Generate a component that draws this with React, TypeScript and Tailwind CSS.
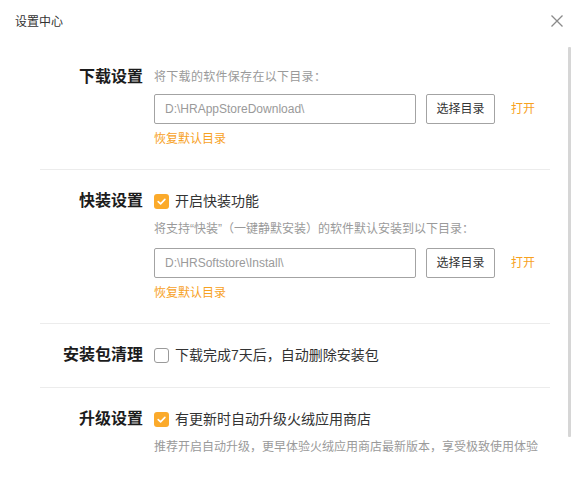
import React from "react";

const ORANGE = "text-[#f7a21f]";

function Check({ checked }: { checked: boolean }) {
  if (checked) {
    return (
      <span className="w-[15px] h-[15px] rounded-[3px] bg-[#fbaa2b] flex items-center justify-center shrink-0">
        <svg width="11" height="11" viewBox="0 0 11 11" fill="none">
          <path d="M2.2 5.6 L4.6 7.9 L8.9 3.4" stroke="#fff" strokeWidth="1.6" strokeLinecap="round" strokeLinejoin="round" />
        </svg>
      </span>
    );
  }
  return <span className="w-[15px] h-[15px] rounded-[3px] border border-[#9a9a9a] bg-white shrink-0" />;
}

function PathRow({ path }: { path: string }) {
  return (
    <div className="flex items-center">
      <div className="w-[262px] h-[30px] border border-[#a3a3a3] rounded-[2px] px-[10px] flex items-center text-[12px] text-[#9a9a9a]">
        {path}
      </div>
      <button className="ml-[10px] w-[69px] h-[30px] border border-[#a3a3a3] rounded-[2px] bg-white text-[12px] text-[#333] flex items-center justify-center">
        选择目录
      </button>
      <span className={`ml-[16px] text-[12px] ${ORANGE}`}>打开</span>
    </div>
  );
}

function Section({ label, children, border = true }: { label: string; children: React.ReactNode; border?: boolean }) {
  return (
    <div className={`flex pt-[20px] pb-[21px] ${border ? "border-b border-[#ececec]" : ""}`}>
      <div className="w-[103px] text-right text-[16px] font-bold leading-[22px] text-[#1c1c1c] shrink-0">{label}</div>
      <div className="ml-[11px] flex flex-col">{children}</div>
    </div>
  );
}

export default function App() {
  return (
    <div className="relative w-[571px] h-[483px] bg-white overflow-hidden font-['Liberation_Sans','Noto_Sans_CJK_SC',sans-serif] [text-spacing-trim:space-all]">
      <div className="h-[46px] flex items-start justify-between pl-[15px] pr-[7px] pt-[14px]">
        <span className="text-[12px] leading-[16px] text-[#333]">设置中心</span>
        <svg width="14" height="14" viewBox="0 0 14 14" className="mt-[0px]">
          <path d="M1.5 1.5 L12.5 12.5 M12.5 1.5 L1.5 12.5" stroke="#8a8a8a" strokeWidth="1.3" />
        </svg>
      </div>

      <div className="ml-[40px] w-[510px]">
        <Section label="下载设置">
          <div className="text-[12px] leading-[22px] text-[#9a9a9a] tracking-[0.3px]">将下载的软件保存在以下目录：</div>
          <div className="mt-[6px]">
            <PathRow path="D:\HRAppStoreDownload\" />
          </div>
          <div className={`mt-[6px] text-[12px] leading-[18px] ${ORANGE}`}>恢复默认目录</div>
        </Section>

        <Section label="快装设置">
          <div className="flex items-center h-[22px]">
            <Check checked />
            <span className="ml-[6px] text-[14px] text-[#333]">开启快装功能</span>
          </div>
          <div className="mt-[8px] text-[12px] leading-[18px] text-[#9a9a9a]">
            将支持“快装”（一键静默安装）的软件默认安装到以下目录：
          </div>
          <div className="mt-[10px]">
            <PathRow path="D:\HRSoftstore\Install\" />
          </div>
          <div className={`mt-[6px] text-[12px] leading-[18px] ${ORANGE}`}>恢复默认目录</div>
        </Section>

        <Section label="安装包清理">
          <div className="flex items-center h-[22px]">
            <Check checked={false} />
            <span className="ml-[6px] text-[14px] text-[#333]">下载完成7天后，自动删除安装包</span>
          </div>
        </Section>

        <Section label="升级设置" border={false}>
          <div className="flex items-center h-[22px]">
            <Check checked />
            <span className="ml-[6px] text-[14px] text-[#333]">有更新时自动升级火绒应用商店</span>
          </div>
          <div className="mt-[8px] text-[12px] leading-[18px] text-[#9a9a9a] whitespace-nowrap">
            推荐开启自动升级，更早体验火绒应用商店最新版本，享受极致使用体验
          </div>
        </Section>
      </div>

      <div className="absolute right-0 top-[47px] w-[3px] h-[390px] bg-[#d6d6d6] rounded-[1px]" />
    </div>
  );
}
